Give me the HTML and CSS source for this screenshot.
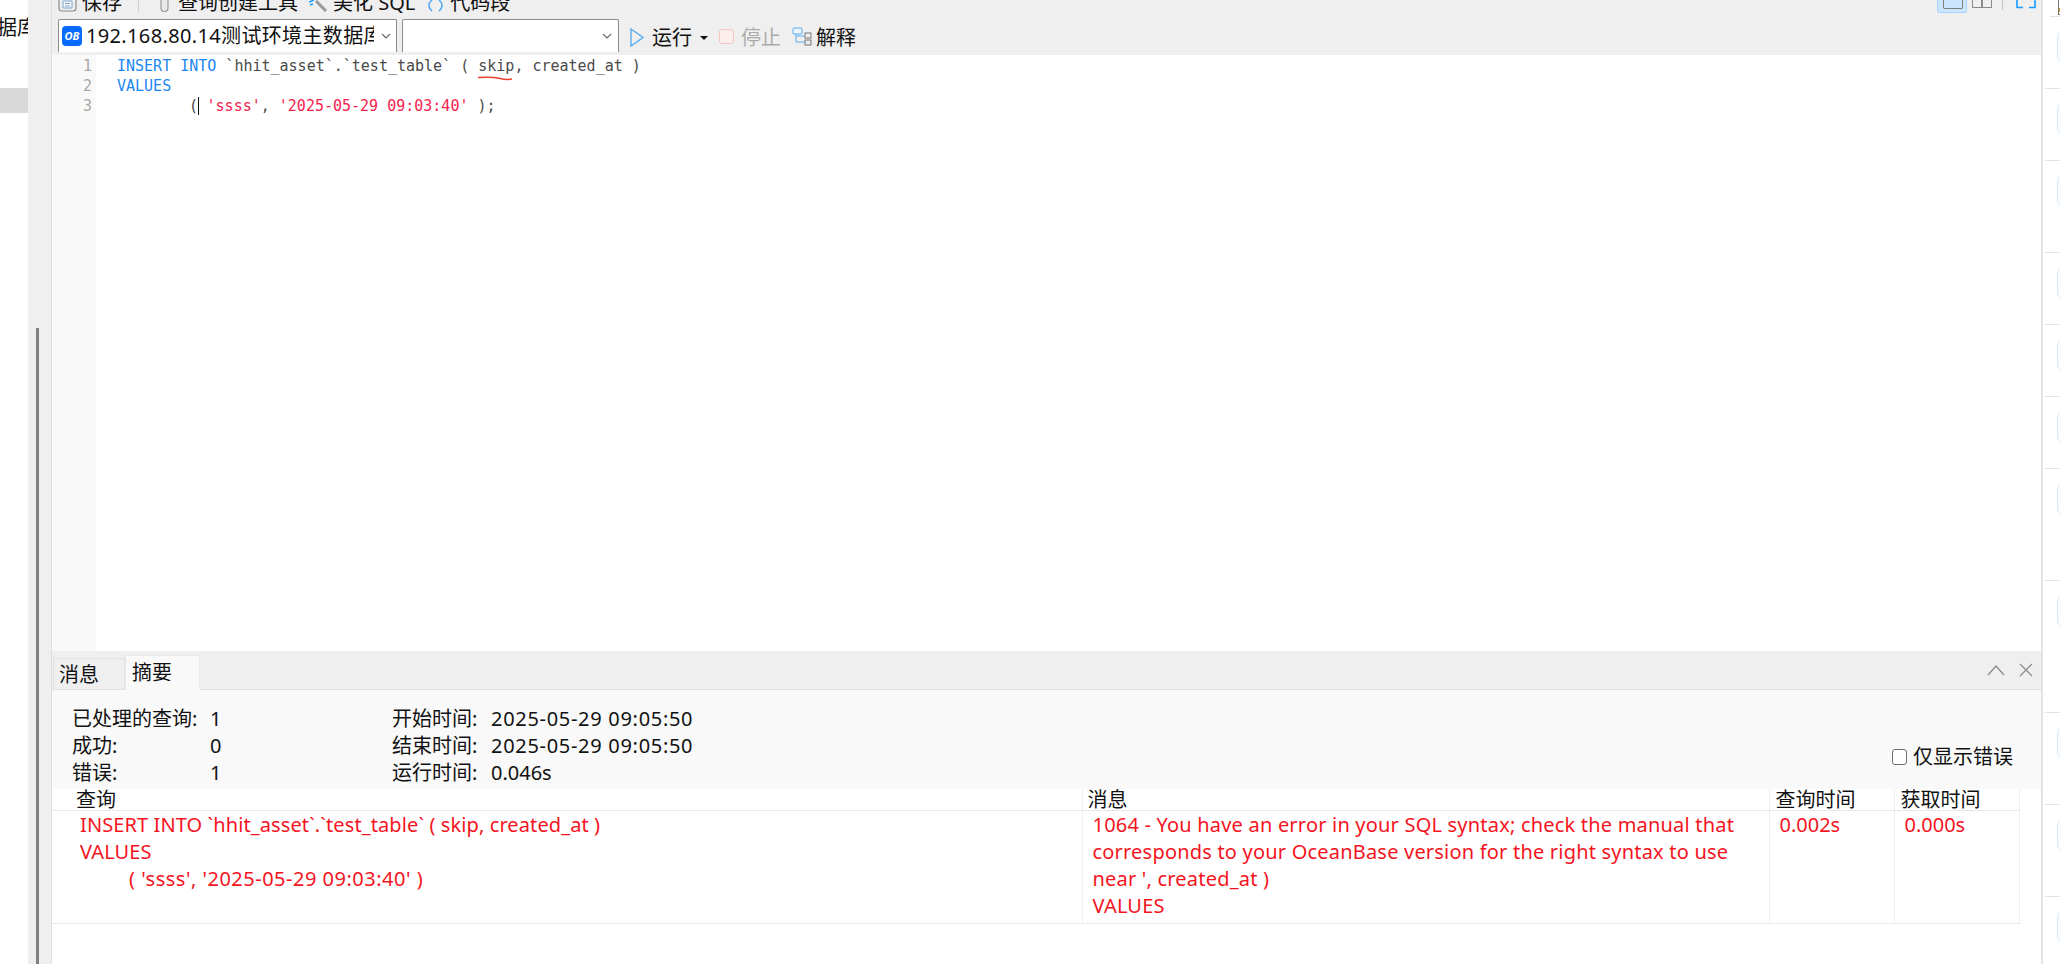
FILE: index.html
```html
<!DOCTYPE html>
<html lang="zh-CN">
<head>
<meta charset="utf-8">
<title>查询</title>
<link rel="stylesheet" href="styles.css">
</head>
<body>
<div class="app">
  <aside class="tree">
    <div class="tree-label">据库</div>
    <div class="tree-selected"></div>
  </aside>
  <div class="rail"><div class="rail-thumb"></div></div>
  <main class="main">
    <header class="toolbar">
      <div class="bar-top">
        <div class="tools">
          <svg class="ico save" width="19" height="12" viewBox="0 0 19 12"><path d="M1 0v8a3 3 0 0 0 3 3h11a3 3 0 0 0 3-3V0" fill="none" stroke="#8c8c8c" stroke-width="1.2"/><path d="M5 1h9v7H5z" fill="#f7f7f7" stroke="#7aa7cf"/><path d="M7 3.5h5M7 6h5" stroke="#7aa7cf"/></svg>
          <span class="tool t-save">保存</span>
          <span class="tool-sep"></span>
          <svg class="ico pin" width="9" height="12" viewBox="0 0 9 12"><path d="M1 0v8a3.5 3.5 0 0 0 7 0V0" fill="#e8e8e8" stroke="#9b9b9b" stroke-width="1.2"/></svg>
          <span class="tool t-build">查询创建工具</span>
          <svg class="ico wand" width="19" height="12" viewBox="0 0 19 12"><path d="M7 1l10 10" stroke="#9a9a9a" stroke-width="3"/><path d="M0 2l5-2M1 5l3-1" stroke="#1a9bff" stroke-width="1.5"/></svg>
          <span class="tool t-beauty">美化 SQL</span>
          <svg class="ico brace" width="17" height="12" viewBox="0 0 17 12"><path d="M5 0C1 3 1 8 5 11M12 0c4 3 4 8 0 11" fill="none" stroke="#4ba6f5" stroke-width="1.4"/></svg>
          <span class="tool">代码段</span>
        </div>
        <div class="views">
          <div class="view-on"><span class="view-box"></span></div>
          <span class="view-split"></span>
          <span class="view-sep"></span>
          <svg class="ico full" width="20" height="9" viewBox="0 0 20 9"><path d="M1 0v7.5h6M19 0v7.5h-6" fill="none" stroke="#1a9bff" stroke-width="1.6"/></svg>
        </div>
      </div>
      <div class="bar-main">
        <div class="combo combo-conn">
          <span class="ob">OB</span>
          <span class="combo-text">192.168.80.14测试环境主数据库</span>
          <svg class="chev" width="10" height="6" viewBox="0 0 10 6"><path d="M1 1l4 4 4-4" fill="none" stroke="#666" stroke-width="1.1"/></svg>
        </div>
        <div class="combo combo-db">
          <svg class="chev" width="10" height="6" viewBox="0 0 10 6"><path d="M1 1l4 4 4-4" fill="none" stroke="#666" stroke-width="1.1"/></svg>
        </div>
        <svg class="ico run" width="14" height="19" viewBox="0 0 14 19"><path d="M1 1l12 8.500L1 18z" fill="none" stroke="#5aaef0" stroke-width="1.400"/></svg>
        <span class="act act-run">运行</span>
        <svg class="ico drop" width="8" height="4" viewBox="0 0 8 4"><path d="M0 0h8L4 4z" fill="#111"/></svg>
        <span class="stop-box"></span>
        <span class="act act-stop">停止</span>
        <svg class="ico explain" width="20" height="19" viewBox="0 0 20 19"><rect x="1" y="1" width="9" height="6" rx="1" fill="#eaf4fd" stroke="#5aaef0"/><rect x="13" y="6" width="6" height="5" fill="#eee" stroke="#777"/><rect x="13" y="13" width="6" height="5" fill="#eee" stroke="#777"/><path d="M4 7v8h9M4 9h9" fill="none" stroke="#5aaef0"/></svg>
        <span class="act">解释</span>
      </div>
    </header>

    <section class="editor">
      <div class="gutter">
        <div>1</div>
        <div>2</div>
        <div>3</div>
      </div>
      <div class="code">
        <div class="line"><span class="kw">INSERT INTO</span> `hhit_asset`.`test_table` ( <span class="err">skip<svg class="squiggle" width="34" height="5" viewBox="0 0 34 5"><path d="M0 1.500C8 1 16 1 22 2.500s8 1.500 12 .5" fill="none" stroke="#e8432e" stroke-width="1.600"/></svg></span>, created_at )</div>
        <div class="line"><span class="kw">VALUES</span></div>
        <div class="line"><span class="tab"></span>(<span class="caret"></span> <span class="str">'ssss'</span>, <span class="str">'2025-05-29 09:03:40'</span> );</div>
      </div>
    </section>

    <section class="panel">
      <div class="tabbar">
        <div class="tab-item">消息</div>
        <div class="tab-item tab-active">摘要</div>
        <div class="panel-ctrl">
          <svg width="18" height="12" viewBox="0 0 18 12"><path d="M1 11l8-9 8 9" fill="none" stroke="#8c8c8c" stroke-width="1.300"/></svg>
          <svg width="14" height="14" viewBox="0 0 14 14"><path d="M1 1l12 12M13 1L1 13" fill="none" stroke="#8c8c8c" stroke-width="1.300"/></svg>
        </div>
      </div>
      <div class="summary">
        <div class="stats">
          <span>已处理的查询:</span><span>1</span><span>开始时间:</span><span class="num">2025-05-29 09:05:50</span>
          <span>成功:</span><span>0</span><span>结束时间:</span><span class="num">2025-05-29 09:05:50</span>
          <span>错误:</span><span>1</span><span>运行时间:</span><span class="dur">0.046s</span>
        </div>
        <label class="only-err"><input class="only-box" type="checkbox">仅显示错误</label>
      </div>
      <table class="results">
        <colgroup>
          <col class="c-query"><col class="c-msg"><col class="c-time"><col class="c-time">
        </colgroup>
        <thead>
          <tr>
            <th class="q">查询</th>
            <th>消息</th>
            <th class="t">查询时间</th>
            <th class="t">获取时间</th>
          </tr>
        </thead>
        <tbody>
          <tr>
            <td class="q">INSERT INTO `hhit_asset`.`test_table` ( skip, created_at )<br>VALUES<br><span class="indent">( 'ssss', '2025-05-29 09:03:40' )</span></td>
            <td>1064 - You have an error in your SQL syntax; check the manual that<br>corresponds to your OceanBase version for the right syntax to use<br>near ', created_at )<br>VALUES</td>
            <td class="t">0.002s</td>
            <td class="t">0.000s</td>
          </tr>
        </tbody>
      </table>
    </section>
  </main>
  <aside class="side">
    <div class="side-top"><span class="thumb"></span></div>
    <div class="side-item h72"><span class="stub"></span></div>
    <div class="side-item h72"><span class="stub"></span></div>
    <div class="side-item h92"><span class="stub"></span></div>
    <div class="side-item h72"><span class="stub"></span></div>
    <div class="side-item h72"><span class="stub"></span></div>
    <div class="side-item h72"><span class="stub"></span></div>
    <div class="side-item h112"><span class="stub"></span></div>
    <div class="side-item h132"><span class="stub"></span></div>
    <div class="side-item h92"><span class="stub"></span></div>
    <div class="side-item h92"><span class="stub"></span></div>
    <div class="side-item h68"><span class="stub"></span></div>
  </aside>
</div>
</body>
</html>
```
FILE: styles.css
```css
* { box-sizing: border-box; }
html, body { margin: 0; height: 100%; overflow: hidden; background: #fff; }
body { font-family: "Noto Sans", "Noto Sans CJK SC", sans-serif; font-size: 20px; color: #111; }
.app { display: flex; width: 2060px; height: 964px; overflow: hidden; }

.tree { width: 28px; flex: none; overflow: hidden; background: #fff; padding-top: 15px; }
.tree-label { width: 44px; margin-left: -3px; line-height: 26px; height: 26px; white-space: nowrap; }
.tree-selected { height: 25px; margin-top: 47px; background: #d9d9d9; }

.rail { width: 24px; flex: none; height: 964px; background: #efefef; border-right: 1px solid #dedede; padding: 328px 0 0 8px; }
.rail-thumb { width: 3px; height: 100%; background: #808080; }

.main { width: 1989px; flex: none; display: flex; flex-direction: column; }

.toolbar { height: 55px; flex: none; background: #efefef; }
.bar-top { height: 19px; display: flex; justify-content: space-between; align-items: flex-start; overflow: hidden; }
.tools { display: flex; align-items: flex-start; height: 19px; padding-left: 6px; }
.tool { line-height: 26px; margin-top: -10px; white-space: nowrap; }
.ico { flex: none; display: block; }
.t-save { margin-left: 5px; }
.tool-sep { width: 1px; height: 12px; background: #cfcfcf; margin: 0 21px 0 16px; }
.t-build { margin-left: 9px; }
.wand { margin-left: 11px; }
.t-beauty { margin-left: 5px; }
.brace { margin: 0 6px 0 12px; }
.views { display: flex; align-items: flex-start; padding-right: 5px; }
.view-on { width: 30px; height: 13px; background: #cce5ff; border: 1px solid #a8d4ff; border-top: 0; border-radius: 0 0 3px 3px; padding: 0 5px; }
.view-box { display: block; width: 20px; height: 9px; border: 1.5px solid #7c7c7c; border-top: 0; border-radius: 0 0 2px 2px; }
.view-split { width: 20px; height: 8px; margin-left: 5px; border: 1.5px solid #8a8a8a; border-top: 0; background: linear-gradient(#8a8a8a, #8a8a8a) center / 2px 100% no-repeat; }
.view-sep { width: 1px; height: 10px; background: #c4c4c4; margin: 0 13px 0 10px; }

.bar-main { height: 33px; display: flex; align-items: flex-start; padding-left: 6px; }
.combo { height: 33px; flex: none; background: #fff; border: 1px solid #8c8c8c; border-bottom: 0; border-radius: 2px 2px 0 0; display: flex; align-items: center; }
.combo-conn { width: 339px; padding-left: 3px; }
.combo-db { width: 217px; margin-left: 5px; justify-content: flex-end; padding-right: 6px; }
.ob { width: 20px; height: 20px; flex: none; border-radius: 4px; background: #0a6cff; color: #fff; font: italic 700 11px/20px "Noto Sans", sans-serif; text-align: center; }
.combo-text { width: 288px; margin-left: 4px; overflow: hidden; white-space: nowrap; line-height: 30px; letter-spacing: .35px; }
.chev { flex: none; margin-left: 7px; }
.run { margin: 9px 0 0 11px; }
.act { margin: 5px 0 0 4px; line-height: 28px; white-space: nowrap; }
.act-run { margin-left: 8px; }
.drop { margin: 17px 0 0 8px; }
.stop-box { width: 15px; height: 15px; flex: none; margin: 10px 0 0 11px; background: #fbeeed; border: 1.5px solid #f4c6c2; border-radius: 3px; }
.act-stop { margin-left: 7px; color: #ababab; }
.explain { margin: 8px 0 0 11px; }

.editor { height: 596px; flex: none; display: flex; background: #fff; font: 15px/20px "DejaVu Sans Mono", monospace; }
.gutter { width: 44px; flex: none; background: #f9f9f9; color: #a8a8a8; padding: 1px 4px 0 0; text-align: right; }
.code { flex: 1; padding: 1px 0 0 21px; color: #4a4a4a; }
.line { height: 20px; white-space: pre; }
.kw { color: #1c86f2; }
.str { color: #f5224d; }
.err { position: relative; }
.squiggle { position: absolute; left: 0; top: 19px; }
.tab { display: inline-block; width: 72px; }
.caret { display: inline-block; width: 0; height: 18px; border-left: 1.5px solid #111; vertical-align: -4px; margin-right: -1.5px; }

.panel { flex: 1; min-height: 0; display: flex; flex-direction: column; background: #fff; }
.tabbar { height: 39px; flex: none; display: flex; align-items: flex-end; padding-left: 1px; background: #efefef; border-bottom: 1px solid #e2e2e2; }
.tab-item { width: 72px; height: 32px; margin-bottom: -1px; border: 1px solid #e2e2e2; line-height: 32px; padding-left: 5px; }
.tab-active { width: 75px; height: 35px; padding-left: 6px; line-height: 33px; background: #f9f9f9; border-color: #eaeaea; border-bottom-color: #f9f9f9; }
.panel-ctrl { margin-left: auto; align-self: center; display: flex; align-items: center; gap: 14px; padding-right: 8px; }
.panel-ctrl svg { display: block; }

.summary { height: 99px; flex: none; background: #f9f9f9; display: flex; justify-content: space-between; padding: 15px 28px 0 20px; }
.stats { display: grid; grid-template-columns: 138px 182px 99px auto; grid-auto-rows: 27px; line-height: 27px; white-space: nowrap; }
.num { letter-spacing: .7px; }
.only-err { align-self: flex-start; margin-top: 38px; display: flex; align-items: center; line-height: 28px; white-space: nowrap; }
.only-box { appearance: none; width: 15px; height: 16px; margin: 0 6px 0 0; background: #fff; border: 1.5px solid #707070; border-radius: 3px; }

.results { width: 1967px; table-layout: fixed; border-collapse: collapse; }
.c-query { width: 1030px; }
.c-msg { width: 687px; }
.c-time { width: 125px; }
.results th { height: 21px; padding: 0 0 0 5px; font-weight: 400; line-height: 21px; text-align: left; border-right: 1px solid #efefef; border-bottom: 1px solid #e8e8e8; white-space: nowrap; }
.results th.q { padding-left: 24px; }
.results th.t { padding-left: 6px; }
.results td { height: 113px; padding: 0 0 0 10px; vertical-align: top; line-height: 27px; letter-spacing: .2px; color: #f5141e; border-right: 1px solid #efefef; border-bottom: 1px solid #e8e8e8; white-space: nowrap; }
.results td.q { padding-left: 28px; letter-spacing: .1px; }
.results td.t { letter-spacing: 0; }
.indent { display: inline-block; margin-left: 49px; letter-spacing: .5px; }

.side { width: 19px; flex: none; border-left: 2px solid #e3e3e3; background: #fff; overflow: hidden; }
.side-top { height: 17px; padding-left: 8px; border-bottom: 1px solid #e3e3e3; margin-left: 7px; }
.thumb { display: block; width: 5px; height: 15px; border: 1px solid #777; border-top: 0; border-right: 0; background: linear-gradient(#fff 8px, #e0902c 8px, #e0902c 12px, #fff 12px); }
.side-item { margin-left: 2px; border-bottom: 1px solid #e3e3e3; padding: 15px 0 0 12px; }
.h72 { height: 72px; }
.h92 { height: 92px; }
.h112 { height: 112px; }
.h132 { height: 132px; }
.h68 { height: 68px; border-bottom: 0; }
.stub { display: block; width: 5px; height: 30px; background: #f5faff; border: 1px solid #dcebf8; border-right: 0; border-radius: 5px 0 0 5px; }
```
